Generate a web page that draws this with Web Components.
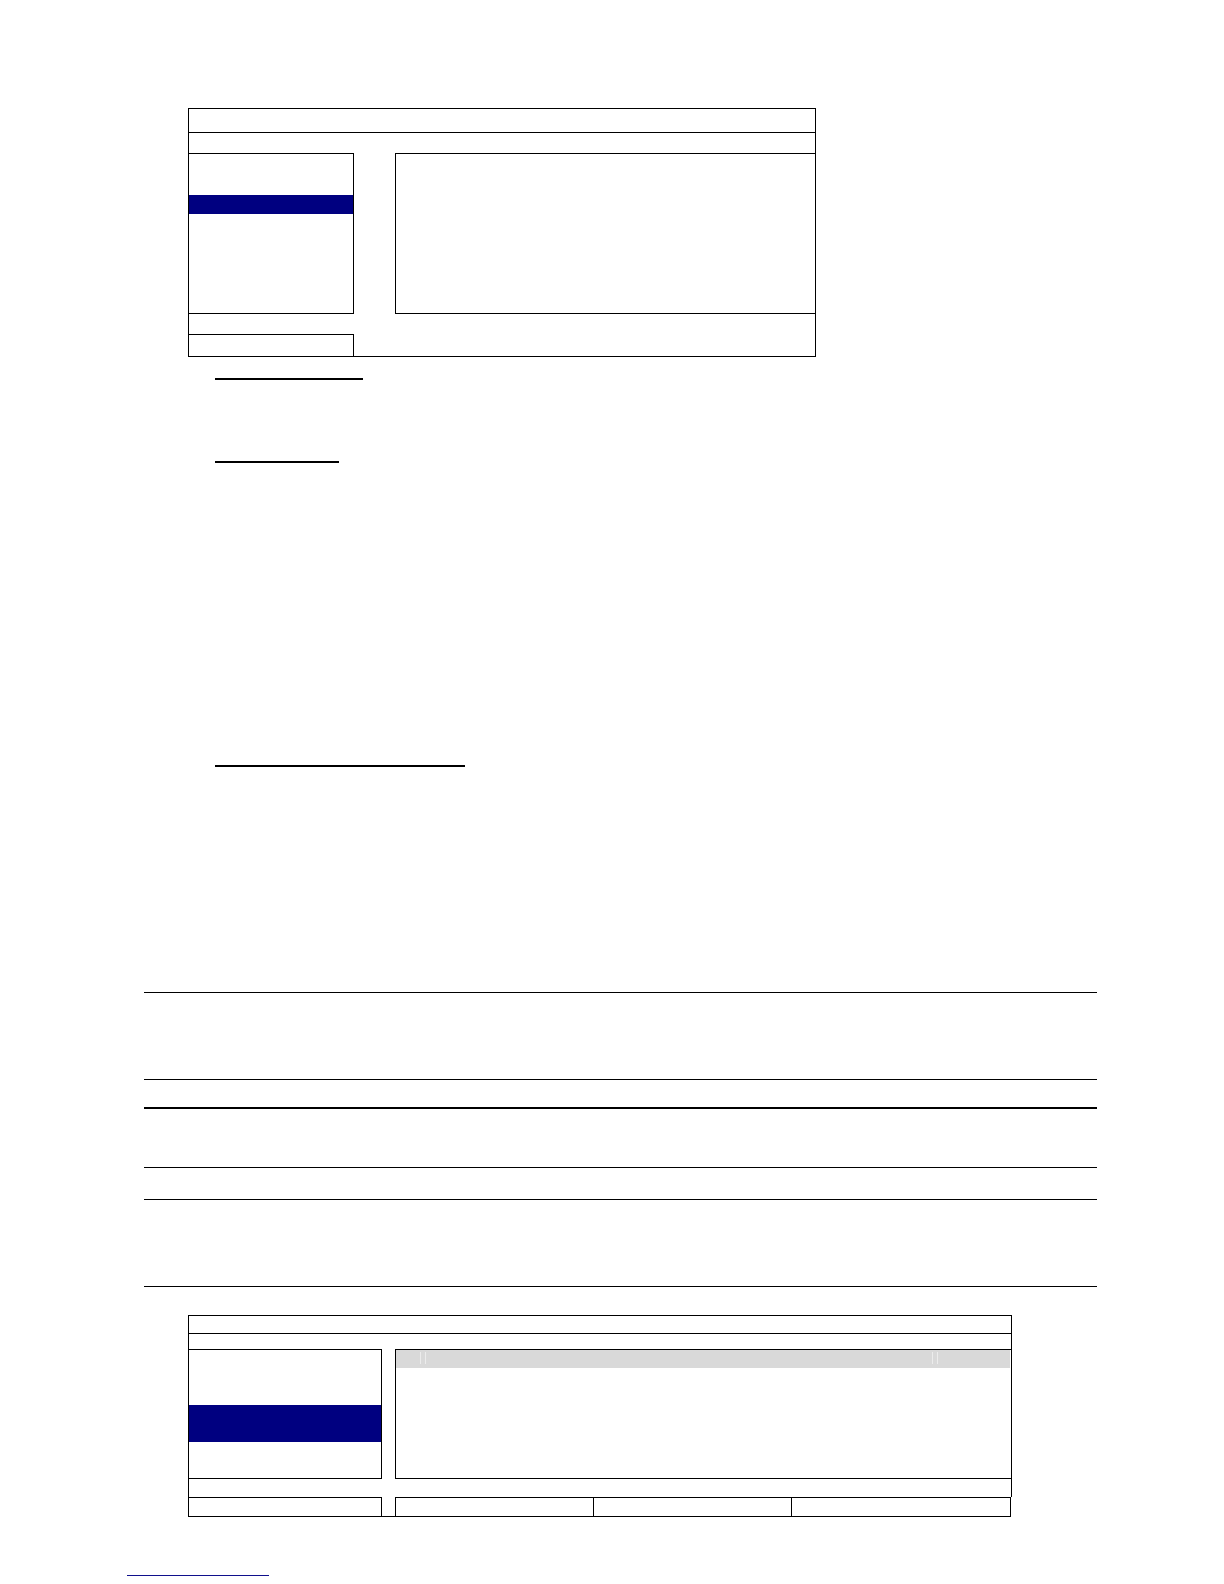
<!DOCTYPE html>
<html lang="en">
<head>
<meta charset="utf-8">
<title>Manual page</title>
<style>
body { margin: 0; background: #fff; color: #000; font-family: "Liberation Sans", Arial, sans-serif; }
</style>
</head>
<body>
<manual-page>
  <menu-frame></menu-frame>
  <heading-rule style="--length:148px;--before:21px"></heading-rule>
  <heading-rule style="--length:124px;--before:81px"></heading-rule>
  <heading-rule style="--length:250px;--before:302px"></heading-rule>
  <note-box style="--before:225px;--height:88px"></note-box>
  <note-box style="--before:27px;--height:61px;--top:2px"></note-box>
  <note-box style="--before:31px;--height:88px"></note-box>
  <list-frame></list-frame>
  <footer-link></footer-link>
</manual-page>
<script>
const define = (name, markup) => {
  const template = document.createElement("template");
  template.innerHTML = markup;
  customElements.define(name, class extends HTMLElement {
    constructor() {
      super();
      this.attachShadow({ mode: "open" }).append(template.content.cloneNode(true));
    }
  });
};

define("manual-page", `
<style>
:host { display: block; }
main { display: flex; flex-direction: column; padding: 108px 127px 8px 144px; }
</style>
<main><slot></slot></main>`);

/* Two-pane settings menu with one selected row */
define("menu-frame", `
<style>
* { box-sizing: border-box; }
:host { display: block; box-sizing: border-box; margin-left: 44px; max-width: 628px; border: 1px solid #000; }
.title { height: 24px; border-bottom: 1px solid #000; }
.strip { height: 20px; }
.panes { display: grid; grid-template-columns: 165px 1fr; column-gap: 41px; height: 161px; }
.menu, .detail { border: 1px solid #000; }
.menu { border-left: 0; padding-top: 41px; }
.detail { border-right: 0; }
.selected { height: 19px; background: #000080; }
.foot { width: 165px; height: 22px; border: solid #000; border-width: 1px 1px 0 0; }
</style>
<div class="title"></div>
<div class="strip"></div>
<div class="panes">
  <div class="menu"><div class="selected"></div></div>
  <div class="detail"></div>
</div>
<div class="strip"></div>
<div class="foot"></div>`);

define("heading-rule", `
<style>
:host { display: block; margin: var(--before) 0 0 71px; width: var(--length); height: 2px; background: #000; }
</style>`);

define("note-box", `
<style>
:host { display: block; box-sizing: border-box; margin-top: var(--before); height: var(--height);
  border: solid #000; border-width: var(--top, 1px) 0 1px; }
</style>
<slot></slot>`);

/* Two-pane menu with a column header and a row of action cells */
define("list-frame", `
<style>
* { box-sizing: border-box; }
:host { display: block; margin: 28px 0 0 44px; max-width: 824px; }
.body { border: 1px solid #000; border-bottom: 0; }
.title { height: 18px; border-bottom: 1px solid #000; }
.strip { height: 15px; }
.lower { height: 18px; }
.panes { display: grid; grid-template-columns: 193px 1fr; column-gap: 13px; height: 130px; }
.menu, .detail { border: 1px solid #000; }
.menu { border-left: 0; padding-top: 55px; }
.detail { border-right: 0; }
.selected { height: 37px; background: #000080; }
.columns { display: flex; justify-content: space-between; height: 18px; margin-right: 1px; padding: 2px 72px 4px 24px; background: #d9d9d9; }
.grip { width: 6px; border: solid #ececec; border-width: 0 1px; }
.actions { display: grid; grid-template-columns: 194px 13px 199px 198px 1fr; height: 20px; margin-right: 1px; border-bottom: 1px solid #000; }
.cell { border: solid #000; border-width: 1px 1px 0 0; }
.start { border-left-width: 1px; }
</style>
<div class="body">
  <div class="title"></div>
  <div class="strip"></div>
  <div class="panes">
    <div class="menu"><div class="selected"></div></div>
    <div class="detail"><div class="columns"><span class="grip"></span><span class="grip"></span></div></div>
  </div>
  <div class="lower"></div>
</div>
<div class="actions">
  <div class="cell start"></div>
  <div></div>
  <div class="cell start"></div>
  <div class="cell"></div>
  <div class="cell"></div>
</div>`);

define("footer-link", `
<style>
:host { display: block; margin: 58px 0 0 -17px; }
a { display: block; width: 142px; height: 1px; background: #10108c; }
</style>
<a href="#"></a>`);
</script>
</body>
</html>
